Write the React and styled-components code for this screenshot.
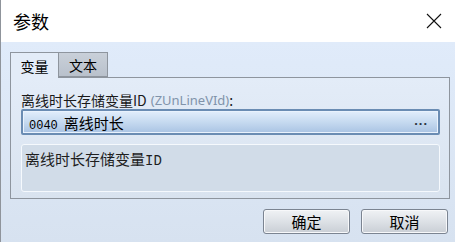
import React from 'react';
import styled, { createGlobalStyle } from 'styled-components';

const GlobalStyle = createGlobalStyle`
    html, body {
        margin: 0;
        padding: 0;
        background: #fff;
    }
    body {
        font-family: "Noto Sans CJK SC", "Liberation Sans", sans-serif;
    }
`;

const Window = styled.div`
    width: 455px;
    height: 242px;
    display: flex;
    flex-direction: column;
    box-sizing: border-box;
    border-left: 1px solid #8f949b;
    overflow: hidden;
`;

const TitleBar = styled.div`
    height: 42px;
    flex-shrink: 0;
    background: #fff;
    display: flex;
    align-items: center;
    justify-content: space-between;
    padding: 0 13px 0 12px;
`;

const Title = styled.div`
    font-size: 18px;
    color: #000;
    line-height: 1;
`;

const CloseButton = styled.div`
    width: 16px;
    height: 16px;
    display: flex;
    align-items: center;
    justify-content: center;
`;

const Body = styled.div`
    flex: 1;
    display: flex;
    flex-direction: column;
    background: linear-gradient(180deg, #e0ebfa 0%, #d7e2f0 100%);
    padding: 9px 5px 0 9px;
`;

const TabRow = styled.div`
    display: flex;
    height: 26px;
    align-items: flex-end;
`;

const Tab = styled.div`
    width: 49px;
    height: ${p => p.active ? '26px' : '25px'};
    box-sizing: border-box;
    border: 1px solid #8e959e;
    border-bottom: ${p => p.active ? 'none' : '1px solid #8e959e'};
    border-left: ${p => p.first ? '1px solid #8e959e' : 'none'};
    background: ${p => p.active ? '#e3ecf8' : 'linear-gradient(180deg, #c9d0d9 0%, #b9c1cc 100%)'};
    font-size: 14px;
    color: #000;
    display: flex;
    align-items: center;
    justify-content: center;
    margin-bottom: ${p => p.active ? '-1px' : '0'};
    position: relative;
    z-index: ${p => p.active ? 2 : 1};
`;

const Panel = styled.div`
    height: 122px;
    box-sizing: border-box;
    border: 1px solid #8e959e;
    background: linear-gradient(180deg, #e3ecf8 0%, #d9e3ef 100%);
    padding: 12px 9px 0 10px;
    display: flex;
    flex-direction: column;
`;

const Label = styled.div`
    font-size: 14px;
    line-height: 20px;
    color: #1a1a1a;
    height: 19px;
    display: flex;
    align-items: center;
`;

const Hint = styled.span`
    color: #8093aa;
    margin-left: 4px;
    font-family: "Noto Sans", "Liberation Sans", sans-serif;
    font-size: 13px;
`;

const Combo = styled.div`
    margin-top: 0;
    height: 26px;
    box-sizing: border-box;
    border: 2px solid #6a8cb3;
    border-radius: 2px;
    background: linear-gradient(180deg, #e2eefc 0%, #c6daf0 50%, #a9c3e3 100%);
    box-shadow: inset 0 0 0 1px #e9f2fd;
    display: flex;
    align-items: center;
    justify-content: space-between;
    padding: 0 10px 0 6px;
    font-size: 15px;
    color: #000;
`;

const Code = styled.span`
    font-family: "Liberation Mono", "DejaVu Sans Mono", monospace;
    font-size: 12px;
    margin-right: 6px;
`;

const Mono = styled.span`
    font-family: "Liberation Mono", "DejaVu Sans Mono", monospace;
    font-size: 14px;
`;

const Dots = styled.span`
    font-family: "Liberation Sans", sans-serif;
    font-size: 13px;
    font-weight: bold;
    letter-spacing: 1px;
    color: #2b3440;
    padding-bottom: 4px;
`;

const Description = styled.div`
    margin-top: 9px;
    height: 48px;
    box-sizing: border-box;
    border: 1px solid #f5f9fd;
    border-radius: 3px;
    background: #d1dce8;
    padding: 3px 3px;
    font-size: 15px;
    line-height: 22px;
    color: #1e1e1e;
`;

const Footer = styled.div`
    display: flex;
    justify-content: flex-end;
    gap: 11px;
    padding: 10px 2px 0 0;
`;

const Button = styled.div`
    width: 87px;
    height: 25px;
    box-sizing: border-box;
    border: 1px solid #7b8491;
    border-radius: 3px;
    background: linear-gradient(180deg, #f0f2f5 0%, #dde1e6 50%, #c9ced5 100%);
    box-shadow: inset 0 0 0 1px #f7f8fa;
    display: flex;
    align-items: center;
    justify-content: center;
    font-size: 15px;
    color: #000;
`;

export default function App() {
    return (
        <>
            <GlobalStyle />
            <Window>
                <TitleBar>
                    <Title>参数</Title>
                    <CloseButton>
                        <svg width="16" height="16" viewBox="0 0 16 16">
                            <path d="M1 1 L15 15 M15 1 L1 15" stroke="#111" strokeWidth="1.1" fill="none" />
                        </svg>
                    </CloseButton>
                </TitleBar>
                <Body>
                    <TabRow>
                        <Tab active first>变量</Tab>
                        <Tab>文本</Tab>
                    </TabRow>
                    <Panel>
                        <Label>
                            离线时长存储变量ID<Hint>(ZUnLineVId)</Hint>:
                        </Label>
                        <Combo>
                            <span><Code>0040</Code>离线时长</span>
                            <Dots>...</Dots>
                        </Combo>
                        <Description>离线时长存储变量<Mono>ID</Mono></Description>
                    </Panel>
                    <Footer>
                        <Button>确定</Button>
                        <Button>取消</Button>
                    </Footer>
                </Body>
            </Window>
        </>
    );
}
